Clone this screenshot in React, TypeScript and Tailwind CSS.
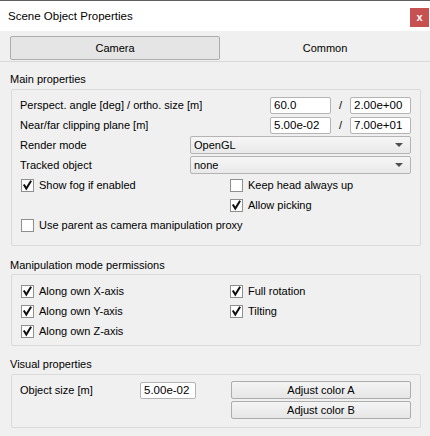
import React from "react";

const font = { fontFamily: '"Liberation Sans", Arial, sans-serif' };

function Check({ checked, label }: { checked: boolean; label: string }) {
  return (
    <div className="flex h-[20px] items-center">
      <div className="flex h-[13px] w-[13px] items-center justify-center border border-[#8f8f8f] bg-white">
        {checked && (
          <svg width="11" height="11" viewBox="0 0 11 11">
            <path d="M2.3 5.4 L4.3 8.6 L8.6 1.6" fill="none" stroke="#111" strokeWidth="2" strokeLinecap="square" />
          </svg>
        )}
      </div>
      <span className="ml-[5px] text-[11px] leading-[16px] text-black">{label}</span>
    </div>
  );
}

function Field({ value, w }: { value: string; w: string }) {
  return (
    <div className={`flex h-[17px] items-center rounded-[2px] border border-[#b4b4b4] bg-white pl-[3px] text-[11.5px] leading-[15px] text-black ${w}`}>
      {value}
    </div>
  );
}

function Select({ value }: { value: string }) {
  return (
    <div className="flex h-[18px] w-[221px] items-center justify-between rounded-[2px] border border-[#b4b4b4] bg-gradient-to-b from-[#f6f6f6] to-[#e9e9e9] pl-[3px] pr-[7px] text-[11px] leading-[15px] text-black">
      <span>{value}</span>
      <svg width="8" height="4" viewBox="0 0 8 4">
        <path d="M0 0 L8 0 L4 4 Z" fill="#505050" />
      </svg>
    </div>
  );
}

function Button({ label }: { label: string }) {
  return (
    <div className="flex h-[18px] w-[180px] items-center justify-center rounded-[2px] border border-[#acacac] bg-gradient-to-b from-[#f4f4f4] to-[#e6e6e6] text-[11px] leading-[15px] text-black">
      {label}
    </div>
  );
}

function SectionLabel({ text }: { text: string }) {
  return <div className="h-[16px] pl-[10px] text-[11px] leading-[16px] text-black">{text}</div>;
}

export default function App() {
  return (
    <div style={font} className="h-[436px] w-[430px] overflow-hidden border-t border-[#5f5f5f] bg-[#f0f0f0]">
      {/* Title bar */}
      <div className="flex h-[30px] items-start justify-between bg-white pl-[8px] pr-[1px]">
        <span className="mt-[7px] text-[11.5px] leading-[16px] text-black">Scene Object Properties</span>
        <div className="mt-[7px] flex h-[19px] w-[19px] items-center justify-center bg-[#c75050] text-[11px] font-bold leading-none text-white">
          x
        </div>
      </div>
      {/* Tabs */}
      <div className="flex h-[31px] border-b border-[#d8d8d8] pl-[10px] pt-[5px]">
        <div className="flex h-[24px] w-[210px] items-center justify-center rounded-[2px] border border-[#adadad] bg-[#e5e5e5] text-[11px] text-black">
          Camera
        </div>
        <div className="flex h-[24px] flex-1 items-center justify-center text-[11px] text-black">Common</div>
      </div>

      {/* Main properties */}
      <div className="mt-[9px]">
        <SectionLabel text="Main properties" />
        <div className="ml-[11px] mt-[2px] h-[157px] w-[410px] rounded-[2px] border border-[#dadada] pl-[8px] pr-[9px] pt-[5px]">
          <div className="flex h-[20px] items-center justify-between">
            <span className="text-[11px] text-black">Perspect. angle [deg] / ortho. size [m]</span>
            <div className="flex items-center">
              <Field value="60.0" w="w-[61px]" />
              <span className="w-[19px] text-center text-[11px] text-black">/</span>
              <Field value="2.00e+00" w="w-[61px]" />
            </div>
          </div>
          <div className="flex h-[20px] items-center justify-between">
            <span className="text-[11px] text-black">Near/far clipping plane [m]</span>
            <div className="flex items-center">
              <Field value="5.00e-02" w="w-[61px]" />
              <span className="w-[19px] text-center text-[11px] text-black">/</span>
              <Field value="7.00e+01" w="w-[61px]" />
            </div>
          </div>
          <div className="flex h-[20px] items-center justify-between">
            <span className="text-[11px] text-black">Render mode</span>
            <Select value="OpenGL" />
          </div>
          <div className="flex h-[20px] items-center justify-between">
            <span className="text-[11px] text-black">Tracked object</span>
            <Select value="none" />
          </div>
          <div className="grid grid-cols-[209px_1fr] pl-[1px]">
            <Check checked label="Show fog if enabled" />
            <Check checked={false} label="Keep head always up" />
            <div />
            <Check checked label="Allow picking" />
            <div className="col-span-2">
              <Check checked={false} label="Use parent as camera manipulation proxy" />
            </div>
          </div>
        </div>
      </div>

      {/* Manipulation mode permissions */}
      <div className="mt-[11px]">
        <SectionLabel text="Manipulation mode permissions" />
        <div className="ml-[11px] mt-[1px] h-[72px] w-[410px] rounded-[2px] border border-[#dadada] pl-[9px] pr-[9px] pt-[6px]">
          <div className="grid grid-cols-[209px_1fr]">
            <Check checked label="Along own X-axis" />
            <Check checked label="Full rotation" />
            <Check checked label="Along own Y-axis" />
            <Check checked label="Tilting" />
            <Check checked label="Along own Z-axis" />
          </div>
        </div>
      </div>

      {/* Visual properties */}
      <div className="mt-[10px]">
        <SectionLabel text="Visual properties" />
        <div className="ml-[11px] mt-[2px] h-[54px] w-[410px] rounded-[2px] border border-[#dadada] pl-[8px] pr-[9px] pt-[6px]">
          <div className="flex justify-between">
            <div className="flex h-[18px] items-center">
              <span className="w-[120px] text-[11px] text-black">Object size [m]</span>
              <Field value="5.00e-02" w="w-[56px]" />
            </div>
            <div className="flex flex-col gap-[2px]">
              <Button label="Adjust color A" />
              <Button label="Adjust color B" />
            </div>
          </div>
        </div>
      </div>
    </div>
  );
}
